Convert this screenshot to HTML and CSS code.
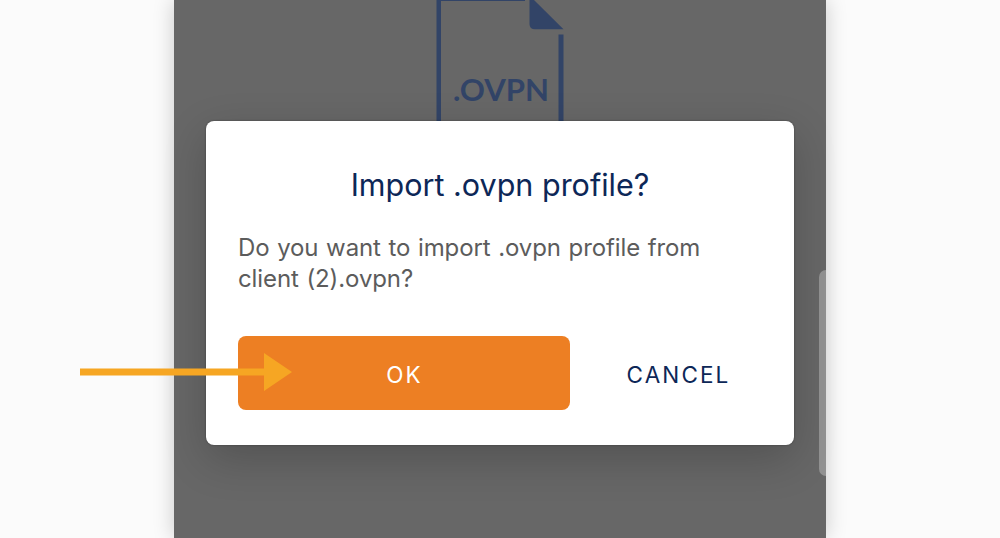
FILE: index.html
```
<!DOCTYPE html>
<html lang="en">
<head>
    <meta charset="utf-8">
    <title>Import .ovpn profile</title>
    <link rel="stylesheet" href="styles.css">
</head>

<body>

<main class="phone">

    <svg class="file-icon" width="130" height="126" viewBox="0 0 130 126">
        <path d="M1.500 0H90v1H6v125H1.500z"/>
        <path d="M94.500 0h4.500L128.500 29.300H100Q94.500 29.300 94.500 24z"/>
        <path d="M123.500 34.500h5V126h-5z"/>
        <text x="18" y="100.500" textLength="96" lengthAdjust="spacingAndGlyphs">.OVPN</text>
    </svg>

    <div class="scrollbar"></div>

    <section class="dialog">
        <h1>Import .ovpn profile?</h1>
        <p>Do you want to import .ovpn profile from<br>client (2).ovpn?</p>
        <div class="buttons">
            <button class="ok">OK</button>
            <button class="cancel">CANCEL</button>
        </div>
    </section>

</main>

<!-- arrow pointing at the OK button -->
<svg class="arrow" width="212" height="38" viewBox="0 0 212 38">
    <path d="M0 15.500h184V0l28 19-28 19V22.500H0z"/>
</svg>

</body>
</html>
```

FILE: styles.css
```
* {
    box-sizing: border-box;
}

body {
    margin: 0;
    height: 538px;
    overflow: hidden;
    background-color: #fbfbfb;
    font-family: Inter, "Liberation Sans", sans-serif;
    position: relative;
}

.phone {
    width: 652px;
    height: 538px;
    margin: 0 auto;
    padding-top: 121px;
    background-color: #676767;
    box-shadow: 0 0 20px rgba(0, 0, 0, 0.2);
    position: relative;
}

.file-icon {
    position: absolute;
    top: 0;
    left: 261px;
    fill: #324467;
}

.file-icon text {
    font-family: Lato, sans-serif;
    font-size: 29.5px;
    font-weight: 700;
}

.scrollbar {
    position: absolute;
    top: 270px;
    right: 0;
    width: 7px;
    height: 206px;
    background-color: #929292;
    border-radius: 7px 0 0 7px;
}

.dialog {
    position: relative;
    width: 588px;
    height: 324px;
    margin: 0 auto;
    padding: 45px 32px 0;
    background-color: #fff;
    border-radius: 8px;
    box-shadow: 0 14px 44px rgba(0, 0, 0, 0.2), 0 0 2px rgba(0, 0, 0, 0.4);
}

h1 {
    margin: 0;
    color: #0d2757;
    font-size: 30.5px;
    font-weight: 400;
    line-height: 38px;
    text-align: center;
}

p {
    margin: 28px 0 0;
    color: #5c5c5c;
    font-size: 24px;
    letter-spacing: -0.1px;
    word-spacing: 1px;
    line-height: 31px;
    white-space: nowrap;
}

.buttons {
    display: flex;
    gap: 24px;
    margin-top: 42px;
}

button {
    height: 74px;
    padding: 3px 0 0 1px;
    border: 0;
    border-radius: 8px;
    font-family: inherit;
    font-size: 22.5px;
    letter-spacing: 2.1px;
}

.ok {
    width: 332px;
    background-color: #ed7f23;
    color: #fff;
}

.cancel {
    flex: 1;
    background: none;
    color: #0d2757;
}

.arrow {
    position: absolute;
    top: 353px;
    left: 80px;
    fill: #f6a623;
}
```
